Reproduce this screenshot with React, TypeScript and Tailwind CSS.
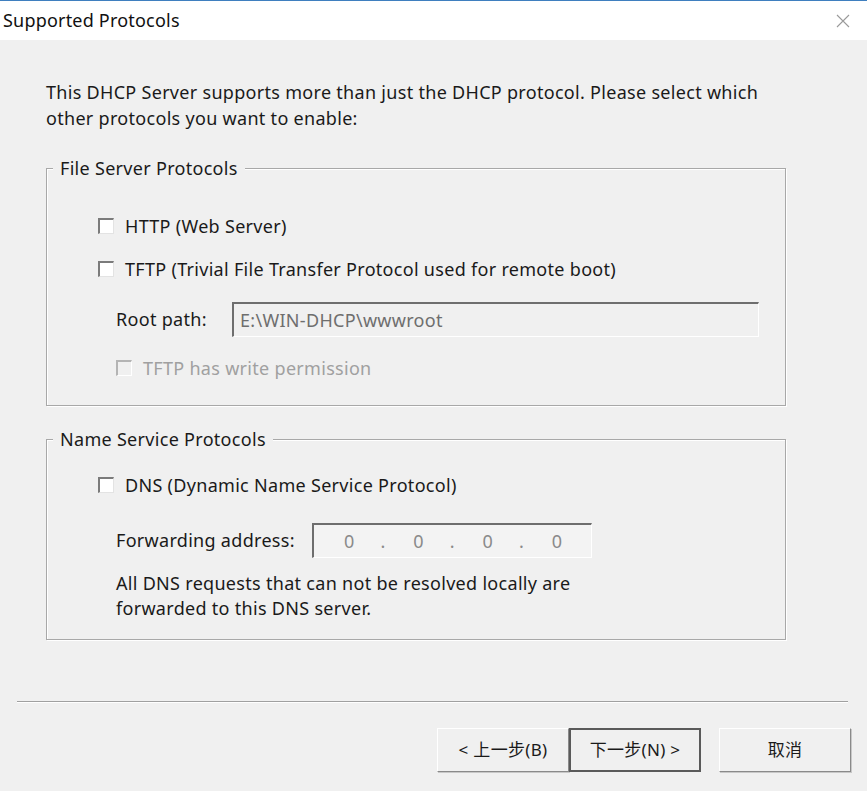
import React from 'react'

const font = { fontFamily: '"Noto Sans", "Noto Sans CJK SC", sans-serif' }

function Check({ label, disabled }: { label: string; disabled?: boolean }) {
  return (
    <label className="flex items-center h-[26px]">
      <span
        className={
          'w-[16px] h-[16px] border-t-2 border-l-2 border-r border-b ' +
          (disabled
            ? 'border-t-[#b4b4b4] border-l-[#b4b4b4] border-r-white border-b-white bg-[#f0f0f0]'
            : 'border-t-[#7b7b7b] border-l-[#7b7b7b] border-r-[#e3e3e3] border-b-[#e3e3e3] bg-white')
        }
      />
      <span className={'ml-[11px] ' + (disabled ? 'text-[#a0a0a0]' : 'text-[#1a1a1a]')}>{label}</span>
    </label>
  )
}

function Group({ title, className, children }: { title: string; className: string; children: React.ReactNode }) {
  return (
    <fieldset
      className={
        'min-w-0 w-full border border-[#a8a8a8] shadow-[inset_1px_1px_0_#ffffff,1px_1px_0_#ffffff] ' + className
      }
    >
      <legend className="ml-[6px] px-[7px] bg-[#f0f0f0] leading-[22px] text-[#1a1a1a]">{title}</legend>
      <div className="pl-[51px]">{children}</div>
    </fieldset>
  )
}

function Btn({ label, primary }: { label: string; primary?: boolean }) {
  return (
    <button
      className={
        'h-[44px] w-[132px] bg-[#f0f0f0] text-[17px] text-[#1a1a1a] ' +
        (primary
          ? 'border-2 border-[#5a5a5a]'
          : 'border border-t-white border-l-white border-r-[#8a8a8a] border-b-[#8a8a8a] shadow-[1px_1px_0_#c8c8c8]')
      }
    >
      {label}
    </button>
  )
}

export default function App() {
  return (
    <div
      className="w-[867px] h-[791px] bg-[#f0f0f0] flex flex-col text-[18px] tracking-[0.3px] overflow-hidden"
      style={font}
    >
      <div className="h-[40px] bg-white border-t border-[#3f7fbf] flex items-center justify-between pl-[3px] pr-[17px]">
        <span className="text-[18px] text-[#111] tracking-[0.2px]">Supported Protocols</span>
        <svg width="14" height="14" viewBox="0 0 14 14">
          <path d="M1 1 L13 13 M13 1 L1 13" stroke="#9a9a9a" strokeWidth="1.1" />
        </svg>
      </div>

      <div className="pl-[46px] pr-[81px]">
        <p className="mt-[39px] leading-[26px] text-[#1a1a1a]">
          This DHCP Server supports more than just the DHCP protocol. Please select which
          <br />
          other protocols you want to enable:
        </p>

        <Group title="File Server Protocols" className="mt-[26px] h-[249px] pt-[34px]">
          <Check label="HTTP (Web Server)" />
          <div className="mt-[17px]">
            <Check label="TFTP (Trivial File Transfer Protocol used for remote boot)" />
          </div>
          <div className="mt-[20px] flex items-center pl-[18px]">
            <span className="w-[116px] text-[#1a1a1a]">Root path:</span>
            <div className="h-[35px] w-[527px] border-t-2 border-l-2 border-r border-b border-t-[#6e6e6e] border-l-[#6e6e6e] border-r-white border-b-white flex items-center pl-[6px] text-[#6e6e6e]">
              E:\WIN-DHCP\wwwroot
            </div>
          </div>
          <div className="mt-[18px] pl-[18px]">
            <Check label="TFTP has write permission" disabled />
          </div>
        </Group>

        <Group title="Name Service Protocols" className="mt-[22px] h-[212px] pt-[22px]">
          <Check label="DNS (Dynamic Name Service Protocol)" />
          <div className="mt-[25px] flex items-center pl-[18px]">
            <span className="w-[196px] text-[#1a1a1a]">Forwarding address:</span>
            <div className="h-[35px] w-[280px] border-t-2 border-l-2 border-r border-b border-t-[#6e6e6e] border-l-[#6e6e6e] border-r-white border-b-white bg-[#f3f3f3] grid grid-cols-4 items-center text-[#8a8a8a]">
              {[0, 1, 2, 3].map((i) => (
                <span key={i} className="flex pl-[30px]">
                  <span>0</span>
                  {i < 3 && <span className="ml-[26px]">.</span>}
                </span>
              ))}
            </div>
          </div>
          <p className="mt-[13px] pl-[18px] leading-[25px] text-[#1a1a1a]">
            All DNS requests that can not be resolved locally are
            <br />
            forwarded to this DNS server.
          </p>
        </Group>
      </div>

      <div className="mt-[61px] ml-[17px] w-[831px] border-t border-[#a0a0a0] shadow-[0_1px_0_#ffffff]" />

      <div className="mt-[26px] flex pl-[437px]">
        <Btn label="< 上一步(B)" />
        <Btn label="下一步(N) >" primary />
        <div className="ml-[18px]">
          <Btn label="取消" />
        </div>
      </div>
    </div>
  )
}
